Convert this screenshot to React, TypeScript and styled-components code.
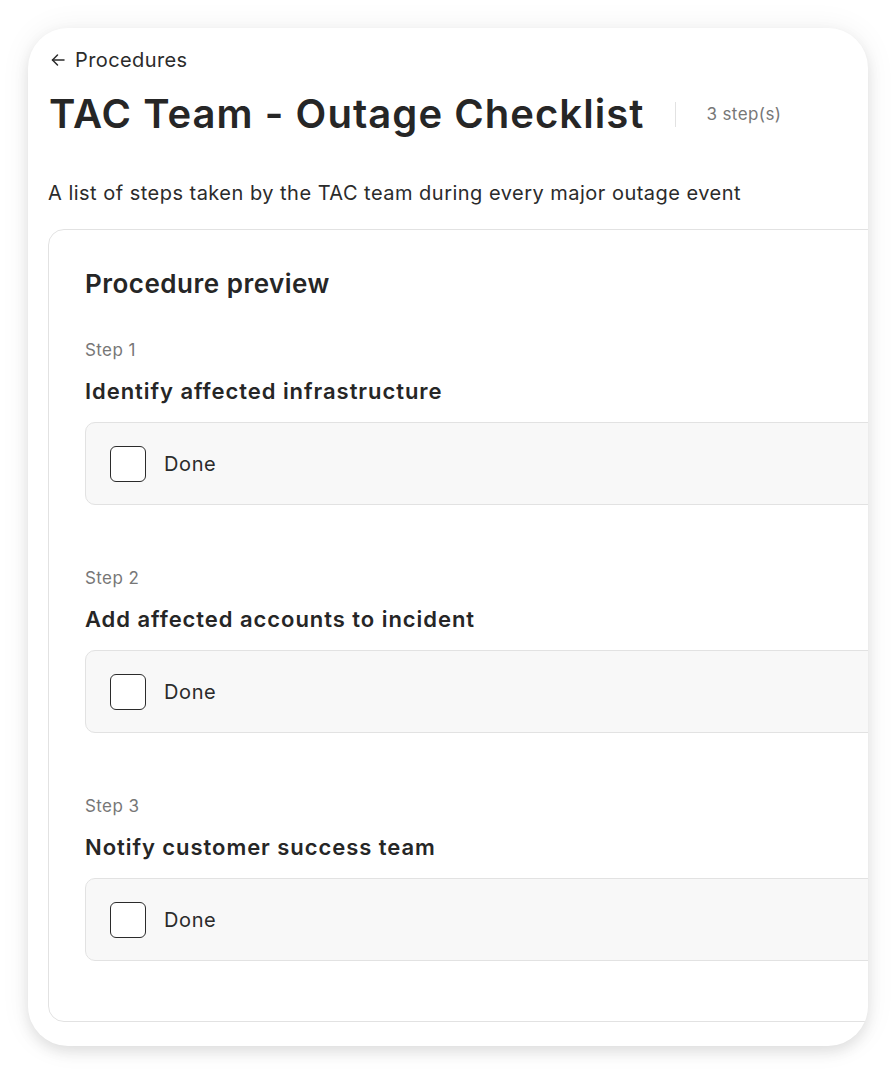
import styled, { createGlobalStyle } from 'styled-components'

const GlobalStyle = createGlobalStyle`
  html, body {
    margin: 0;
    padding: 0;
    background: #ffffff;
    font-family: Inter, "Noto Sans", "Liberation Sans", sans-serif;
    color: #262626;
  }
  * {
    box-sizing: border-box;
  }
`

const Page = styled.div`
  padding: 28px;
  height: 1074px;
`

const Frame = styled.div`
  height: 1018px;
  background: #ffffff;
  border-radius: 40px;
  box-shadow: 0 6px 14px rgba(0, 0, 0, 0.1), 0 0 32px rgba(0, 0, 0, 0.06);
  overflow: hidden;
  padding: 18px 0 24px 20px;
  display: flex;
  flex-direction: column;
`

const BackLink = styled.a`
  display: flex;
  align-items: center;
  gap: 9px;
  font-size: 20px;
  line-height: 28px;
  letter-spacing: 0.4px;
  color: #2b2b2b;
  text-decoration: none;
  padding-left: 2px;
`

const TitleRow = styled.div`
  display: flex;
  align-items: center;
  margin-top: 16px;
  padding-left: 1px;
`

const Title = styled.h1`
  margin: 0;
  font-size: 40px;
  line-height: 48px;
  font-weight: 600;
  color: #262626;
  letter-spacing: 1.05px;
`

const Divider = styled.span`
  width: 1px;
  height: 25px;
  background: #e2e2e2;
  margin: 0 30px 0 31px;
`

const StepCount = styled.span`
  font-size: 17px;
  letter-spacing: 0.4px;
  color: #777777;
`

const Description = styled.p`
  margin: 41px 0 0;
  font-size: 20px;
  line-height: 28px;
  letter-spacing: 0.48px;
  color: #2b2b2b;
`

const PreviewCard = styled.section`
  margin-top: 22px;
  width: 880px;
  flex: 1;
  border: 1px solid #e2e2e2;
  border-radius: 16px;
  padding: 38px 36px 60px;
`

const PreviewHeading = styled.h2`
  margin: 0;
  font-size: 26px;
  line-height: 32px;
  font-weight: 600;
  letter-spacing: 0.5px;
  color: #262626;
`

const StepList = styled.div`
  display: flex;
  flex-direction: column;
  gap: 61px;
  margin-top: 38px;
`

const Step = styled.div`
  display: flex;
  flex-direction: column;
`

const StepLabel = styled.div`
  font-size: 17px;
  line-height: 24px;
  letter-spacing: 0.4px;
  color: #777777;
`

const StepTitle = styled.div`
  margin-top: 14px;
  font-size: 22px;
  line-height: 30px;
  font-weight: 600;
  letter-spacing: 0.95px;
  color: #262626;
`

const CheckRow = styled.label`
  margin-top: 16px;
  height: 83px;
  display: flex;
  align-items: center;
  gap: 18px;
  padding: 0 24px;
  background: #f8f8f8;
  border: 1px solid #e2e2e2;
  border-radius: 10px;
  font-size: 20px;
  letter-spacing: 0.6px;
  color: #2b2b2b;
`

const Box = styled.span<{ $checked?: boolean }>`
  width: 36px;
  height: 36px;
  border: 1.5px solid #2b2b2b;
  border-radius: 6px;
  background: ${p => (p.$checked ? '#2b2b2b' : '#ffffff')};
`

const steps = [
  'Identify affected infrastructure',
  'Add affected accounts to incident',
  'Notify customer success team',
]

const ArrowLeft = () => (
  <svg width="16" height="16" viewBox="0 0 16 16" fill="none" stroke="#2b2b2b" strokeWidth="1.5" strokeLinecap="round" strokeLinejoin="round">
    <path d="M14 8H2.5" />
    <path d="M7.5 3L2.5 8l5 5" />
  </svg>
)

export default function App() {
  return (
    <>
      <GlobalStyle />
      <Page>
        <Frame>
          <BackLink href="#">
            <ArrowLeft />
            Procedures
          </BackLink>
          <TitleRow>
            <Title>TAC Team - Outage Checklist</Title>
            <Divider />
            <StepCount>{steps.length} step(s)</StepCount>
          </TitleRow>
          <Description>A list of steps taken by the TAC team during every major outage event</Description>
          <PreviewCard>
            <PreviewHeading>Procedure preview</PreviewHeading>
            <StepList>
              {steps.map((s, i) => (
                <Step key={s}>
                  <StepLabel>Step {i + 1}</StepLabel>
                  <StepTitle>{s}</StepTitle>
                  <CheckRow>
                    <Box />
                    Done
                  </CheckRow>
                </Step>
              ))}
            </StepList>
          </PreviewCard>
        </Frame>
      </Page>
    </>
  )
}
